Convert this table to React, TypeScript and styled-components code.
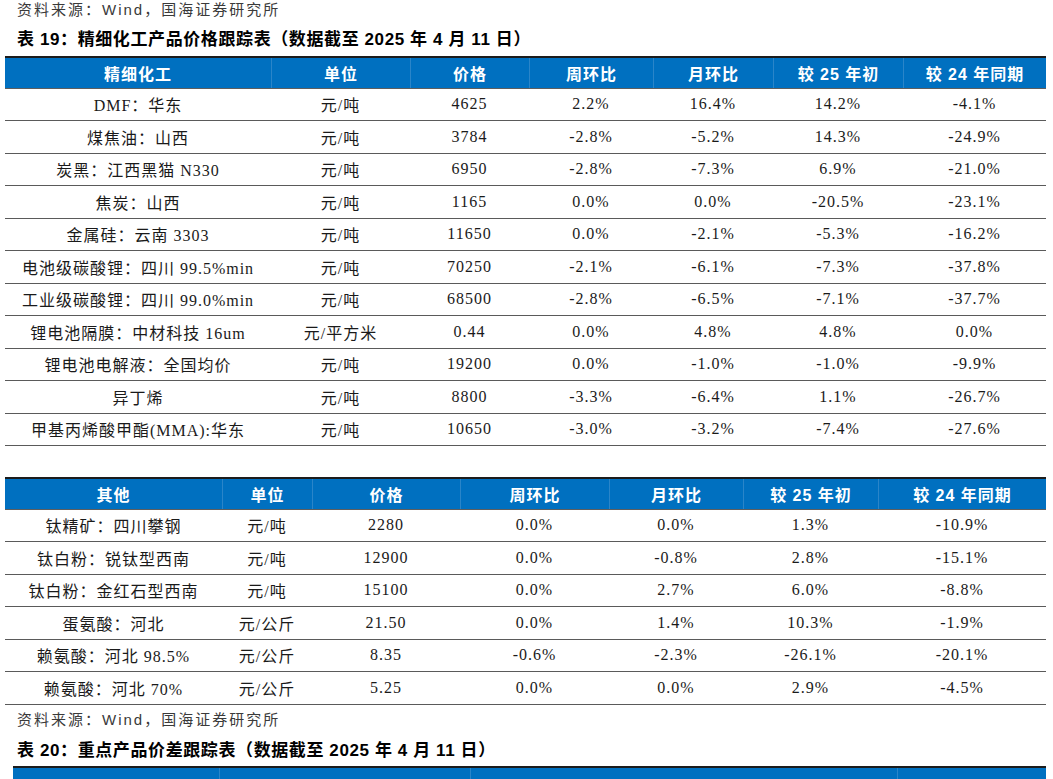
import React from "react";
import styled, { createGlobalStyle } from "styled-components";

const GlobalStyle = createGlobalStyle`
    html, body {
        margin: 0;
        padding: 0;
        overflow: hidden;
        background: #ffffff;
    }
    body {
        font-family: "Liberation Serif", "Noto Sans CJK SC", serif;
    }
`

const Page = styled.div`
    width: 1053px;
    padding: 0 7px 0 5px;
    box-sizing: border-box;
`

const Source = styled.div<{ $mt?: number }>`
    margin-top: ${(p) => p.$mt ?? 0}px;
    padding-left: 12px;
    font-family: "Liberation Sans", "Noto Sans CJK SC", sans-serif;
    font-size: 15px;
    line-height: 20px;
    letter-spacing: 2px;
    color: #3a3a3a;
`

const Title = styled.div<{ $mt: number }>`
    margin-top: ${(p) => p.$mt}px;
    padding-left: 12px;
    font-family: "Liberation Sans", "Noto Sans CJK SC", sans-serif;
    font-weight: bold;
    font-size: 17px;
    line-height: 24px;
    letter-spacing: 0.6px;
    color: #000;
`

const Table = styled.div<{ $mt: number; $ml?: number }>`
    margin-top: ${(p) => p.$mt}px;
    margin-left: ${(p) => p.$ml ?? 0}px;
`

const HeaderRow = styled.div<{ $cols: string }>`
    display: grid;
    grid-template-columns: ${(p) => p.$cols};
    height: 29.5px;
    background: #0070c0;
    border-top: 2px solid #1c1c1c;
    border-bottom: 1px solid #5e5e5e;
`

const HeadCell = styled.div`
    display: flex;
    align-items: center;
    justify-content: center;
    color: #ffffff;
    font-family: "Liberation Sans", "Noto Sans CJK SC", sans-serif;
    font-weight: bold;
    font-size: 16px;
    letter-spacing: 1px;
    white-space: nowrap;
    & + & {
        border-left: 1px solid #2a85c9;
    }
`

const BodyRow = styled.div<{ $cols: string }>`
    display: grid;
    grid-template-columns: ${(p) => p.$cols};
    height: 31.5px;
    border-bottom: 1px solid #5a5a5a;
`

const Cell = styled.div`
    display: flex;
    align-items: center;
    justify-content: center;
    font-size: 16px;
    letter-spacing: 1px;
    color: #1a1a1a;
    white-space: nowrap;
`

const fineCols = "266px 139px 119px 124px 120px 130px 1fr";
const otherCols = "217px 90px 148px 149px 134px 135px 1fr";
const spreadCols = "206px 251px 427px 1fr";

const fineHead = ["精细化工", "单位", "价格", "周环比", "月环比", "较 25 年初", "较 24 年同期"];
const otherHead = ["其他", "单位", "价格", "周环比", "月环比", "较 25 年初", "较 24 年同期"];

const fineRows = [
    ["DMF：华东", "元/吨", "4625", "2.2%", "16.4%", "14.2%", "-4.1%"],
    ["煤焦油：山西", "元/吨", "3784", "-2.8%", "-5.2%", "14.3%", "-24.9%"],
    ["炭黑：江西黑猫 N330", "元/吨", "6950", "-2.8%", "-7.3%", "6.9%", "-21.0%"],
    ["焦炭：山西", "元/吨", "1165", "0.0%", "0.0%", "-20.5%", "-23.1%"],
    ["金属硅：云南 3303", "元/吨", "11650", "0.0%", "-2.1%", "-5.3%", "-16.2%"],
    ["电池级碳酸锂：四川 99.5%min", "元/吨", "70250", "-2.1%", "-6.1%", "-7.3%", "-37.8%"],
    ["工业级碳酸锂：四川 99.0%min", "元/吨", "68500", "-2.8%", "-6.5%", "-7.1%", "-37.7%"],
    ["锂电池隔膜：中材科技 16um", "元/平方米", "0.44", "0.0%", "4.8%", "4.8%", "0.0%"],
    ["锂电池电解液：全国均价", "元/吨", "19200", "0.0%", "-1.0%", "-1.0%", "-9.9%"],
    ["异丁烯", "元/吨", "8800", "-3.3%", "-6.4%", "1.1%", "-26.7%"],
    ["甲基丙烯酸甲酯(MMA):华东", "元/吨", "10650", "-3.0%", "-3.2%", "-7.4%", "-27.6%"],
];

const otherRows = [
    ["钛精矿：四川攀钢", "元/吨", "2280", "0.0%", "0.0%", "1.3%", "-10.9%"],
    ["钛白粉：锐钛型西南", "元/吨", "12900", "0.0%", "-0.8%", "2.8%", "-15.1%"],
    ["钛白粉：金红石型西南", "元/吨", "15100", "0.0%", "2.7%", "6.0%", "-8.8%"],
    ["蛋氨酸：河北", "元/公斤", "21.50", "0.0%", "1.4%", "10.3%", "-1.9%"],
    ["赖氨酸：河北 98.5%", "元/公斤", "8.35", "-0.6%", "-2.3%", "-26.1%", "-20.1%"],
    ["赖氨酸：河北 70%", "元/公斤", "5.25", "0.0%", "0.0%", "2.9%", "-4.5%"],
];

function PriceTable({ cols, head, rows, mt }: { cols: string; head: string[]; rows: string[][]; mt: number }) {
    return (
        <Table $mt={mt}>
            <HeaderRow $cols={cols}>
                {head.map((h) => <HeadCell key={h}>{h}</HeadCell>)}
            </HeaderRow>
            {rows.map((r) => (
                <BodyRow $cols={cols} key={r[0]}>
                    {r.map((c, i) => <Cell key={i}>{c}</Cell>)}
                </BodyRow>
            ))}
        </Table>
    )
}

function App() {
    return (
        <>
            <GlobalStyle />
            <Page>
                <Source>资料来源：Wind，国海证券研究所</Source>
                <Title $mt={8}>表 19：精细化工产品价格跟踪表（数据截至 2025 年 4 月 11 日）</Title>
                <PriceTable cols={fineCols} head={fineHead} rows={fineRows} mt={4} />
                <PriceTable cols={otherCols} head={otherHead} rows={otherRows} mt={31} />
                <Source $mt={5}>资料来源：Wind，国海证券研究所</Source>
                <Title $mt={9}>表 20：重点产品价差跟踪表（数据截至 2025 年 4 月 11 日）</Title>
                <Table $mt={3} $ml={8}>
                    <HeaderRow $cols={spreadCols}>
                        <HeadCell />
                        <HeadCell />
                        <HeadCell />
                        <HeadCell />
                    </HeaderRow>
                </Table>
            </Page>
        </>
    )
}

export default App;
